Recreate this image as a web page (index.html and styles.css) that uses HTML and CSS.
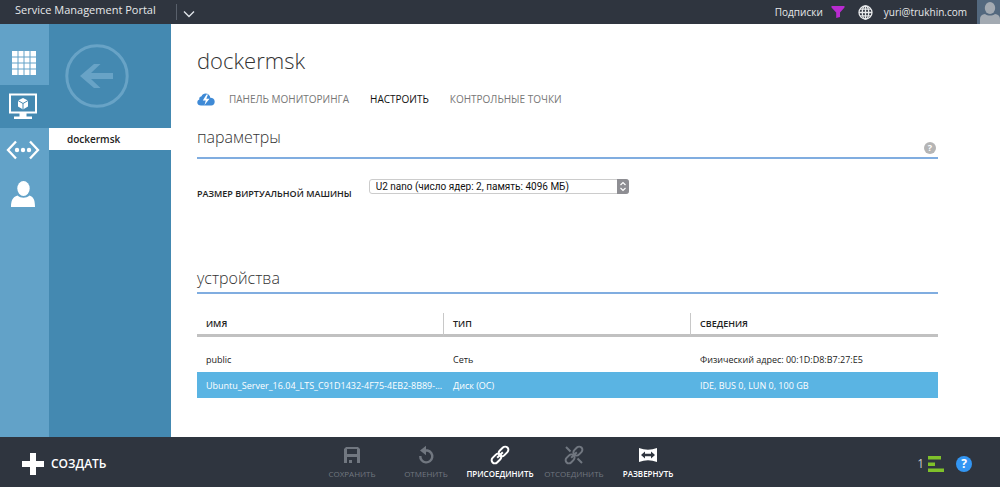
FILE: index.html
```html
<!DOCTYPE html>
<html lang="ru">
<head>
<meta charset="utf-8">
<meta name="viewport" content="width=device-width, initial-scale=1">
<title>Service Management Portal</title>
<link rel="stylesheet" href="styles.css">
</head>
<body>
<header class="topbar">
  <a class="brand" href="#">Service Management Portal</a>
  <button class="brand-toggle" type="button" aria-label="Меню">
    <svg width="12" height="8" viewBox="0 0 12 8"><path d="M1 1.5 6 6.5 11 1.5" fill="none" stroke="#dfe3e8" stroke-width="1.4"/></svg>
  </button>
  <div class="account">
    <button class="subscriptions" type="button">Подписки
      <svg width="14" height="12" viewBox="0 0 14 12"><path d="M.5 0h13v1.6L9 6.5V11L5.2 12V6.500L.5 1.600z" fill="#b92bd0"/></svg>
    </button>
    <button class="language" type="button" aria-label="Язык">
      <svg width="15" height="15" viewBox="0 0 15 15" fill="none" stroke="#e6e8ea" stroke-width="1.3"><circle cx="7.500" cy="7.500" r="6.500"/><ellipse cx="7.500" cy="7.500" rx="3.200" ry="6.500"/><path d="M7.500 1v13M1 7.500h13M2 4.200h11M2 10.800h11"/></svg>
    </button>
    <a class="user" href="#">yuri@trukhin.com</a>
    <svg class="avatar" width="23" height="24" viewBox="0 0 23 24"><path fill="#53687e" d="M0 0h23v24H0z"/><ellipse cx="13" cy="8" rx="5.200" ry="6" fill="#a3aab2"/><path d="M3 24v-5c0-3 2-4.500 5-5 3 2 7 2 10 0 3 .5 5 2 5 5v5z" fill="#a3aab2"/></svg>
  </div>
</header>

<div class="workspace">
  <nav class="rail" aria-label="Разделы">
    <a class="rail-item rail-all" href="#" aria-label="Все элементы">
      <svg width="24" height="24" viewBox="0 0 24 24"><path fill="#fff" d="M0 0h24v24H0z"/><path d="M6 0v24M12 0v24M18 0v24M0 6h24M0 12h24M0 18h24" stroke="#62a2c8" stroke-width="1"/></svg>
    </a>
    <a class="rail-item rail-vm" href="#" aria-label="Виртуальные машины">
      <svg width="30" height="27" viewBox="0 0 30 27"><path d="M2 1.500h26v18H2z" fill="none" stroke="#fff" stroke-width="2"/><path d="M11.500 20h7v3.500H24V26H6v-2.500h5.500z" fill="#fff"/><path d="M15 5l5 2.500v6L15 16.500l-5-3v-6z" fill="#fff"/><path d="M10 7.500 15 10.500l5-3M15 10.500v6" fill="none" stroke="#4489b1" stroke-width="1"/></svg>
    </a>
    <a class="rail-item" href="#" aria-label="Сети">
      <svg width="34" height="20" viewBox="0 0 34 20"><path d="M10 1.500 2 10l8 8.500M24 1.500 32 10l-8 8.500" fill="none" stroke="#fff" stroke-width="2.300"/><g fill="#fff"><circle cx="11" cy="10" r="2.200"/><circle cx="17" cy="10" r="2.200"/><circle cx="23" cy="10" r="2.200"/></g></svg>
    </a>
    <a class="rail-item" href="#" aria-label="Учетные записи">
      <svg width="26" height="28" viewBox="0 0 26 28" fill="#fff"><ellipse cx="13.500" cy="8.500" rx="6.200" ry="7.500"/><path d="M1 27c0-6 1.500-10 6.500-11.500 3.500 3 8.500 3 12 0C24 17 25 21 25 27z"/></svg>
    </a>
  </nav>

  <aside class="sidebar">
    <button class="back" type="button" aria-label="Назад">
      <svg width="64" height="64" viewBox="0 0 64 64"><circle cx="32" cy="32" r="30.200" fill="none" stroke="#68a3c6" stroke-width="3"/><path d="M15 32 29 20h6.500L26 29h22v6H26l9.500 9H29z" fill="#68a3c6"/></svg>
    </button>
    <a class="sidebar-item" href="#" aria-current="page">dockermsk</a>
  </aside>

  <main class="content">
    <h1 class="title">dockermsk</h1>
    <nav class="tabs" aria-label="Вкладки">
      <a class="tab-icon" href="#" aria-label="Быстрый запуск">
        <svg width="18" height="13" viewBox="0 0 18 13"><path d="M4 12.500C1.800 12.500.3 11.300.3 9.500c0-1.500.8-2.600 2-3C2 5 2.800 3.500 4.500 3.300 5.200 1.300 6.800.5 8.500.5c2.700 0 4.500 1.700 4.800 4.200 2.600 0 4.400 1.600 4.400 4 0 2.300-1.500 3.800-3.500 3.800z" fill="#3f8ad6"/><path d="M9.500 1.500 5.800 7.500h3L7.500 12 12.500 5.700H9.300L11 1.500z" fill="#fff"/></svg>
      </a>
      <a class="tab" href="#">ПАНЕЛЬ МОНИТОРИНГА</a>
      <a class="tab tab-active" href="#" aria-current="page">НАСТРОИТЬ</a>
      <a class="tab" href="#">КОНТРОЛЬНЫЕ ТОЧКИ</a>
    </nav>

    <section class="settings">
      <div class="section-head">
        <h2 class="section-title">параметры</h2>
        <button class="hint" type="button" aria-label="Справка">?</button>
      </div>
      <div class="field">
        <label class="field-label" for="vm-size">РАЗМЕР ВИРТУАЛЬНОЙ МАШИНЫ</label>
        <span class="select-wrap">
          <select class="select" id="vm-size">
            <option>U2 nano (число ядер: 2, память: 4096 МБ)</option>
          </select>
          <svg class="select-arrows" width="12" height="15" viewBox="0 0 12 15"><path fill="#8e8e93" d="M0 0h9a3 3 0 0 1 3 3v9a3 3 0 0 1-3 3H0z"/><path d="M3.500 6 6 3.500 8.500 6M3.500 9 6 11.500 8.500 9" fill="none" stroke="#fff" stroke-width="1.200"/></svg>
        </span>
      </div>
    </section>

    <section class="devices">
      <div class="section-head section-head-compact">
        <h2 class="section-title">устройства</h2>
      </div>
      <table class="grid">
        <thead>
          <tr><th scope="col">ИМЯ</th><th scope="col">ТИП</th><th scope="col">СВЕДЕНИЯ</th></tr>
        </thead>
        <tbody>
          <tr class="row-first"><td>public</td><td>Сеть</td><td>Физический адрес: 00:1D:D8:B7:27:E5</td></tr>
          <tr class="row-selected"><td>Ubuntu_Server_16.04_LTS_C91D1432-4F75-4EB2-8B89-...</td><td>Диск (ОС)</td><td>IDE, BUS 0, LUN 0, 100 GB</td></tr>
        </tbody>
      </table>
    </section>
  </main>
</div>

<footer class="drawer">
  <button class="create" type="button">
    <svg width="22" height="22" viewBox="0 0 22 22"><path d="M8 0h6v8h8v6h-8v8H8v-8H0V8h8z" fill="#fff"/></svg>
    СОЗДАТЬ
  </button>
  <div class="commands">
    <button class="command" type="button" disabled>
      <svg width="20" height="20" viewBox="0 0 20 20"><path d="M4 2h12l2 2v14H2V4z" fill="#717780"/><path d="M5 4h10v5H5zM5 12h10v6h-5v-3H7v3H5z" fill="#2f353f"/></svg>
      СОХРАНИТЬ
    </button>
    <button class="command" type="button" disabled>
      <svg width="20" height="20" viewBox="0 0 20 20"><path d="M8 5.500h3.500a6 6 0 1 1-7.200 5.500" fill="none" stroke="#717780" stroke-width="2.400"/><path d="M10 .8v9.400L4 5.500z" fill="#717780"/></svg>
      ОТМЕНИТЬ
    </button>
    <button class="command" type="button">
      <svg width="20" height="20" viewBox="0 0 20 20"><g transform="rotate(-45 10 10)" fill="none" stroke="#fff" stroke-width="2"><rect x="-.5" y="6.800" width="11" height="6.400" rx="3.200"/><rect x="9.500" y="6.800" width="11" height="6.400" rx="3.200"/><path d="M6 10h8"/></g></svg>
      ПРИСОЕДИНИТЬ
    </button>
    <button class="command" type="button" disabled>
      <svg width="20" height="20" viewBox="0 0 20 20"><g fill="none" stroke="#717780" stroke-width="2"><g transform="rotate(-45 10 10)"><rect x="-.5" y="6.800" width="10" height="6.400" rx="3.200"/><rect x="10.500" y="6.800" width="10" height="6.400" rx="3.200"/><path d="M6 10h8"/></g><path d="m2 2 4.500 4.500M13.500 13.500 18 18"/></g></svg>
      ОТСОЕДИНИТЬ
    </button>
    <button class="command" type="button">
      <svg width="20" height="20" viewBox="0 0 20 20"><path d="M1 3q9 3.600 18 0v14q-9-3.600-18 0z" fill="#fff"/><path d="M3 10l4-3.500v2.300h6V6.500l4 3.500-4 3.500v-2.300H7v2.300z" fill="#2f353f"/></svg>
      РАЗВЕРНУТЬ
    </button>
  </div>
  <div class="status">
    <button class="jobs" type="button" aria-label="Уведомления: 1">1
      <svg width="16" height="16" viewBox="0 0 16 16" fill="#7fc12a"><path d="M0 0h13v3.500H0zM0 6.500h7V10H0zM0 12.500h16V16H0z"/></svg>
    </button>
    <button class="help" type="button" aria-label="Справка">?</button>
  </div>
</footer>
</body>
</html>
```
FILE: styles.css
```css
* { box-sizing: border-box; }

body {
  margin: 0;
  min-height: 100vh;
  display: flex;
  flex-direction: column;
  background: #fff;
  color: #222;
  font-family: "Open Sans", "Noto Sans", sans-serif;
  font-size: 9px;
}

button {
  border: 0;
  padding: 0;
  background: none;
  color: inherit;
  font: inherit;
}

a { color: inherit; text-decoration: none; }
svg { display: block; flex: none; }

.topbar {
  display: flex;
  align-items: center;
  height: 24px;
  padding-left: 15px;
  background: #2f353f;
  color: #e6e8ea;
  font-size: 10px;
}

.brand { padding-bottom: 5px; font-size: 11px; }

.brand-toggle {
  height: 16px;
  margin-left: 20px;
  padding: 4px 0 0 6px;
  border-left: 1px solid #59606b;
}

.account {
  display: flex;
  align-items: center;
  margin-left: auto;
}

.subscriptions { display: flex; align-items: center; gap: 8px; }
.language { margin-left: 13px; }
.user { margin: 0 10px 0 11px; }

.workspace { flex: 1; display: flex; }

.rail {
  width: 49px;
  display: flex;
  flex-direction: column;
  background: #62a2c8;
}

.rail-item {
  display: flex;
  align-items: center;
  justify-content: center;
  height: 44px;
  padding-right: 3px;
}

.rail-all { height: 61px; padding: 16px 2px 0 0; }
.rail-vm { height: 43px; background: #4489b1; }

.sidebar {
  width: 122px;
  background: #4489b1;
}

.back { display: block; margin: 20px 0 20px 16px; }

.sidebar-item {
  display: block;
  padding-left: 18px;
  background: #fff;
  color: #222;
  font-size: 10px;
  font-weight: 600;
  line-height: 22px;
}

.content {
  flex: 1;
  min-width: 0;
  padding: 20px 62px 38px 26px;
}

.title {
  margin: 0;
  color: #333;
  font-size: 22px;
  font-weight: 300;
  line-height: 32px;
}

.tabs {
  display: flex;
  align-items: center;
  gap: 21px;
  height: 16px;
  margin-top: 15px;
  color: #777;
  font-size: 10px;
}

.tab-icon { margin-right: -7px; }
.tab-active { color: #111; }

.section-head {
  display: flex;
  align-items: flex-start;
  justify-content: space-between;
  height: 34px;
  padding-right: 2px;
  border-bottom: 2px solid #80ade0;
}

.section-head-compact { height: 28px; }

.settings { margin-top: 18px; }
.devices { margin-top: 66px; }

.section-title {
  margin: 0;
  color: #333;
  font-size: 16px;
  font-weight: 300;
  line-height: 24px;
}

.hint {
  width: 12px;
  height: 12px;
  margin-top: 17px;
  border-radius: 50%;
  background: #b5b5b5;
  color: #fff;
  font-weight: 700;
  line-height: 12px;
}

.field {
  display: flex;
  align-items: flex-start;
  gap: 17px;
  padding-top: 20px;
}

.field-label {
  padding-top: 9px;
  font-weight: 600;
  line-height: 12px;
}

.select-wrap { position: relative; width: 260px; }

.select {
  display: block;
  width: 100%;
  height: 15px;
  padding: 0 16px 0 6px;
  border: 1px solid #ccc;
  border-radius: 3px;
  appearance: none;
  background: #fff;
  color: #111;
  font-family: Roboto, sans-serif;
  font-size: 10px;
  line-height: 13px;
}

.select-arrows {
  position: absolute;
  top: 0;
  right: 0;
  pointer-events: none;
}

.grid {
  width: 100%;
  margin-top: 19px;
  border-collapse: separate;
  border-spacing: 0;
  table-layout: fixed;
}

.grid th,
.grid td {
  padding: 0 0 0 9px;
  text-align: left;
  white-space: nowrap;
}

.grid th {
  height: 24px;
  border-bottom: 3px solid #c1c1c1;
  font-weight: 600;
}

.grid th:not(:last-child) { border-right: 1px solid #c8c8c8; }
.grid td { height: 26px; }
.grid .row-first td { height: 35px; padding-top: 9px; }
.row-selected { background: #5ab4e3; color: #fff; }

.drawer {
  display: grid;
  grid-template-columns: 1fr auto 1fr;
  align-items: center;
  height: 50px;
  padding: 0 22px;
  background: #2f353f;
  color: #fff;
}

.create {
  display: flex;
  align-items: center;
  justify-self: start;
  gap: 7px;
  padding-top: 3px;
  font-size: 12px;
  font-weight: 600;
}

.commands { display: flex; }

.command {
  display: flex;
  flex-direction: column;
  align-items: center;
  gap: 3px;
  width: 74px;
  font-size: 8px;
  font-weight: 600;
}

.command:disabled { color: #717780; font-weight: 400; }

.status {
  display: flex;
  align-items: center;
  justify-self: end;
  gap: 12px;
  padding: 3px 6px 0 0;
}

.jobs {
  display: flex;
  align-items: center;
  gap: 4px;
  color: #c5c8cc;
  font-size: 12px;
}

.help {
  width: 16px;
  height: 16px;
  border-radius: 50%;
  background: #3396f3;
  color: #fff;
  font-size: 12px;
  font-weight: 700;
  line-height: 16px;
}
```
